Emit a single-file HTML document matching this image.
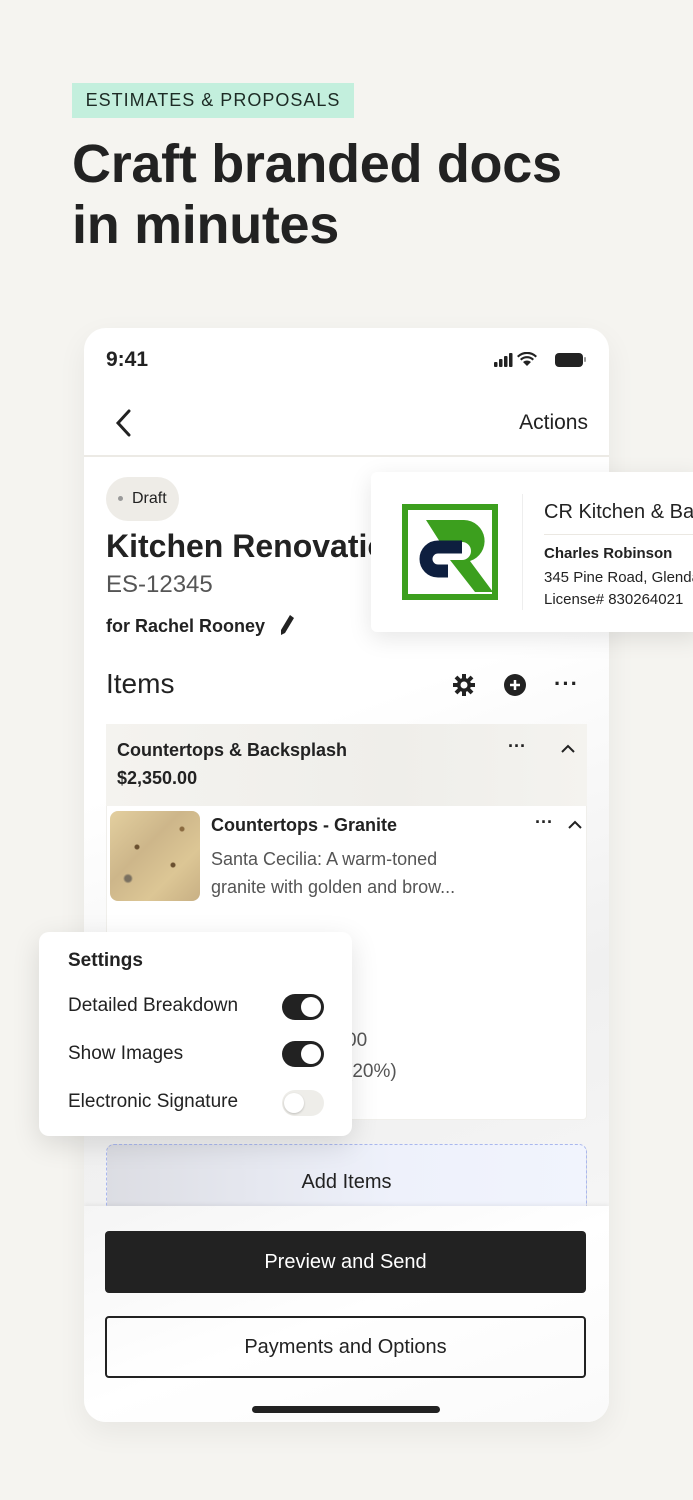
<!DOCTYPE html>
<html><head><meta charset="utf-8"><style>
*{margin:0;padding:0;box-sizing:border-box}
body{width:693px;height:1500px;background:#f5f4f0;font-family:"Liberation Sans",sans-serif;color:#222;position:relative;overflow:hidden}
.a{position:absolute}
.tag{left:72px;top:83px;width:282px;height:35px;background:#c3efdd;font-size:18px;letter-spacing:1px;line-height:35px;text-align:center;color:#1d2b25}
.h1{left:72px;top:134px;font-size:54px;font-weight:bold;line-height:61px;letter-spacing:-0.3px;color:#222}
.phone{left:84px;top:328px;width:525px;height:1094px;background:#fff;border-radius:22px;box-shadow:0 10px 30px rgba(0,0,0,.06);overflow:hidden}
.toggle{width:42px;height:26px;border-radius:13px;background:#222}
.toggle::after{content:"";position:absolute;top:3px;right:3px;width:20px;height:20px;border-radius:50%;background:#fff}
.off{background:#eeede9}.off::after{left:2px;right:auto;box-shadow:0 1px 2px rgba(0,0,0,.2)}
</style></head><body>
<div class="a tag">ESTIMATES &amp; PROPOSALS</div>
<div class="a h1">Craft branded docs<br>in minutes</div>

<div class="a phone">
 <div class="a" style="left:22px;top:20px;font-size:21px;font-weight:bold">9:41</div>
 <svg class="a" style="left:410px;top:24px" width="94" height="16" viewBox="0 0 94 16">
  <rect x="0" y="10" width="3.5" height="5" rx="1" fill="#222"/><rect x="5" y="7" width="3.5" height="8" rx="1" fill="#222"/><rect x="10" y="4" width="3.5" height="11" rx="1" fill="#222"/><rect x="15" y="1" width="3.5" height="14" rx="1" fill="#222"/>
  <path d="M33 14 L29 10 A6 6 0 0 1 37 10 Z M26 7 A10 10 0 0 1 40 7 L38.5 8.5 A8 8 0 0 0 27.5 8.5Z M23 4 A14 14 0 0 1 43 4 L41.5 5.5 A12 12 0 0 0 24.5 5.5Z" fill="#222"/>
  <rect x="61" y="1" width="28" height="14" rx="4" fill="#222"/><rect x="90" y="5" width="2" height="5" rx="1" fill="#999"/>
 </svg>
 <svg class="a" style="left:30px;top:80px" width="18" height="30" viewBox="0 0 18 30"><path d="M15 3 L4 15 L15 27" stroke="#222" stroke-width="3" fill="none" stroke-linecap="round"/></svg>
 <div class="a" style="right:21px;top:83px;font-size:21px">Actions</div>
 <div class="a" style="left:0;top:127px;width:525px;height:2px;background:#eceae5"></div>
 <div class="a" style="left:0;top:129px;width:525px;height:965px;background:linear-gradient(160deg,#fff 30%,#f0f0f0 60%,#fafafa 100%)"></div>
 <div class="a" style="left:22px;top:149px;width:73px;height:44px;border-radius:22px;background:#eeece7;font-size:16px;line-height:44px;padding-left:26px">Draft</div>
 <div class="a" style="left:34px;top:168px;width:5px;height:5px;border-radius:50%;background:#999"></div>
 <div class="a" style="left:22px;top:200px;font-size:32px;font-weight:bold;white-space:nowrap;width:265px;overflow:hidden">Kitchen Renovation</div>
 <div class="a" style="left:22px;top:243px;font-size:24px;color:#555">ES-12345</div>
 <div class="a" style="left:22px;top:288px;font-size:18px;font-weight:bold">for Rachel Rooney</div>
 <svg class="a" style="left:195px;top:286px" width="16" height="22" viewBox="0 0 16 22"><path d="M11 1 L15 4 L6 19 L2 21 L2 16 Z" fill="#222"/></svg>
 <div class="a" style="left:22px;top:340px;font-size:28px">Items</div>
 <svg class="a" style="left:368px;top:345px" width="24" height="24" viewBox="0 0 24 24"><g fill="#222"><circle cx="12" cy="12" r="7"/><g stroke="#222" stroke-width="4"><line x1="12" y1="1" x2="12" y2="23"/><line x1="1" y1="12" x2="23" y2="12"/><line x1="4" y1="4" x2="20" y2="20"/><line x1="20" y1="4" x2="4" y2="20"/></g></g><circle cx="12" cy="12" r="3.5" fill="#fff"/></svg>
 <svg class="a" style="left:419px;top:345px" width="24" height="24" viewBox="0 0 24 24"><circle cx="12" cy="12" r="11" fill="#222"/><path d="M12 7v10M7 12h10" stroke="#fff" stroke-width="2.5"/></svg>
 <div class="a" style="left:470px;top:343px;font-size:22px;font-weight:bold;letter-spacing:1px">···</div>

 <div class="a" style="left:22px;top:396px;width:481px;height:396px;background:#fff;border:1px solid #f0efeb;border-radius:4px"></div>
 <div class="a" style="left:22px;top:396px;width:481px;height:82px;background:linear-gradient(90deg,#f4f3ef,#efeeea 60%,#f4f3ef)"></div>
 <div class="a" style="left:33px;top:412px;font-size:18px;font-weight:bold">Countertops &amp; Backsplash</div>
 <div class="a" style="left:33px;top:440px;font-size:18px;font-weight:bold">$2,350.00</div>
 <div class="a" style="left:424px;top:408px;font-size:18px;font-weight:bold">···</div>
 <svg class="a" style="left:476px;top:416px" width="16" height="10"><path d="M2 8 L8 2 L14 8" stroke="#222" stroke-width="2" fill="none"/></svg>
 <div class="a" style="left:26px;top:483px;width:90px;height:90px;border-radius:8px;background:radial-gradient(circle at 30% 40%,#6a5030 2px,transparent 3px),radial-gradient(circle at 70% 60%,#6a5030 2px,transparent 3px),radial-gradient(circle at 20% 75%,#7a7060 3px,transparent 5px),radial-gradient(circle at 80% 20%,#8a6a40 2px,transparent 3px),linear-gradient(135deg,#e3cf9f,#cdb68a 40%,#dcc695 70%,#c8b084)"></div>
 <div class="a" style="left:127px;top:487px;font-size:18px;font-weight:bold">Countertops - Granite</div>
 <div class="a" style="left:127px;top:517px;font-size:18px;color:#555;line-height:28px">Santa Cecilia: A warm-toned<br>granite with golden and brow...</div>
 <div class="a" style="left:451px;top:484px;font-size:18px;font-weight:bold">···</div>
 <svg class="a" style="left:483px;top:492px" width="16" height="10"><path d="M2 8 L8 2 L14 8" stroke="#222" stroke-width="2" fill="none"/></svg>
 <div class="a" style="left:262px;top:702px;font-size:19px;color:#555">00</div>
 <div class="a" style="left:262px;top:733px;font-size:19px;color:#555">(20%)</div>

 <div class="a" style="left:22px;top:816px;width:481px;height:70px;border:1.5px dashed #a9b7ee;border-radius:8px;background:linear-gradient(90deg,#dcdde3,#eef1fb 60%,#f1f4fd)"></div>
 <div class="a" style="left:22px;top:843px;width:481px;text-align:center;font-size:20px">Add Items</div>
 <div class="a" style="left:0;top:878px;width:525px;height:216px;background:linear-gradient(160deg,#f5f5f5,#fff 50%,#fafafa);box-shadow:0 -2px 4px rgba(0,0,0,.05)"></div>
 <div class="a" style="left:21px;top:903px;width:481px;height:62px;background:#222;border-radius:4px;color:#fff;font-size:20px;line-height:62px;text-align:center">Preview and Send</div>
 <div class="a" style="left:21px;top:988px;width:481px;height:62px;border:2px solid #222;border-radius:4px;font-size:20px;line-height:58px;text-align:center">Payments and Options</div>
 <div class="a" style="left:168px;top:1078px;width:188px;height:7px;border-radius:4px;background:#222"></div>
</div>

<div class="a" style="left:371px;top:472px;width:330px;height:160px;background:#fff;border-radius:6px;box-shadow:0 6px 24px rgba(0,0,0,.1)"></div>
<svg class="a" style="left:402px;top:504px" width="96" height="96" viewBox="0 0 96 96">
 <rect x="3" y="3" width="90" height="90" fill="none" stroke="#3c9f1e" stroke-width="6"/>
 <path d="M24 16 H62 A21 21 0 0 1 68 57 L91 88 H73 L48 56 H60 A9 9 0 0 0 60 38 H38 Z" fill="#3c9f1e"/>
 <path d="M60 43 H36 A12 12 0 0 0 36 67 H46" stroke="#0e1f3f" stroke-width="13" fill="none"/>
</svg>
<div class="a" style="left:522px;top:494px;width:1px;height:116px;background:#eee"></div>
<div class="a" style="left:544px;top:501px;font-size:20px;white-space:nowrap">CR Kitchen &amp; Bath</div>
<div class="a" style="left:544px;top:534px;width:160px;height:1px;background:#ebe8e2"></div>
<div class="a" style="left:544px;top:545px;font-size:15px;font-weight:bold;white-space:nowrap">Charles Robinson</div>
<div class="a" style="left:544px;top:567px;font-size:15px;white-space:nowrap;line-height:22px">345 Pine Road, Glendale<br>License# 830264021</div>

<div class="a" style="left:39px;top:932px;width:313px;height:204px;background:#fff;border-radius:10px;box-shadow:0 8px 28px rgba(0,0,0,.12)"></div>
<div class="a" style="left:68px;top:950px;font-size:19px;font-weight:bold">Settings</div>
<div class="a" style="left:68px;top:995px;font-size:19px">Detailed Breakdown</div>
<div class="a" style="left:68px;top:1043px;font-size:19px">Show Images</div>
<div class="a" style="left:68px;top:1091px;font-size:19px">Electronic Signature</div>
<div class="a toggle" style="left:282px;top:994px"></div>
<div class="a toggle" style="left:282px;top:1041px"></div>
<div class="a toggle off" style="left:282px;top:1090px"></div>
</body></html>
